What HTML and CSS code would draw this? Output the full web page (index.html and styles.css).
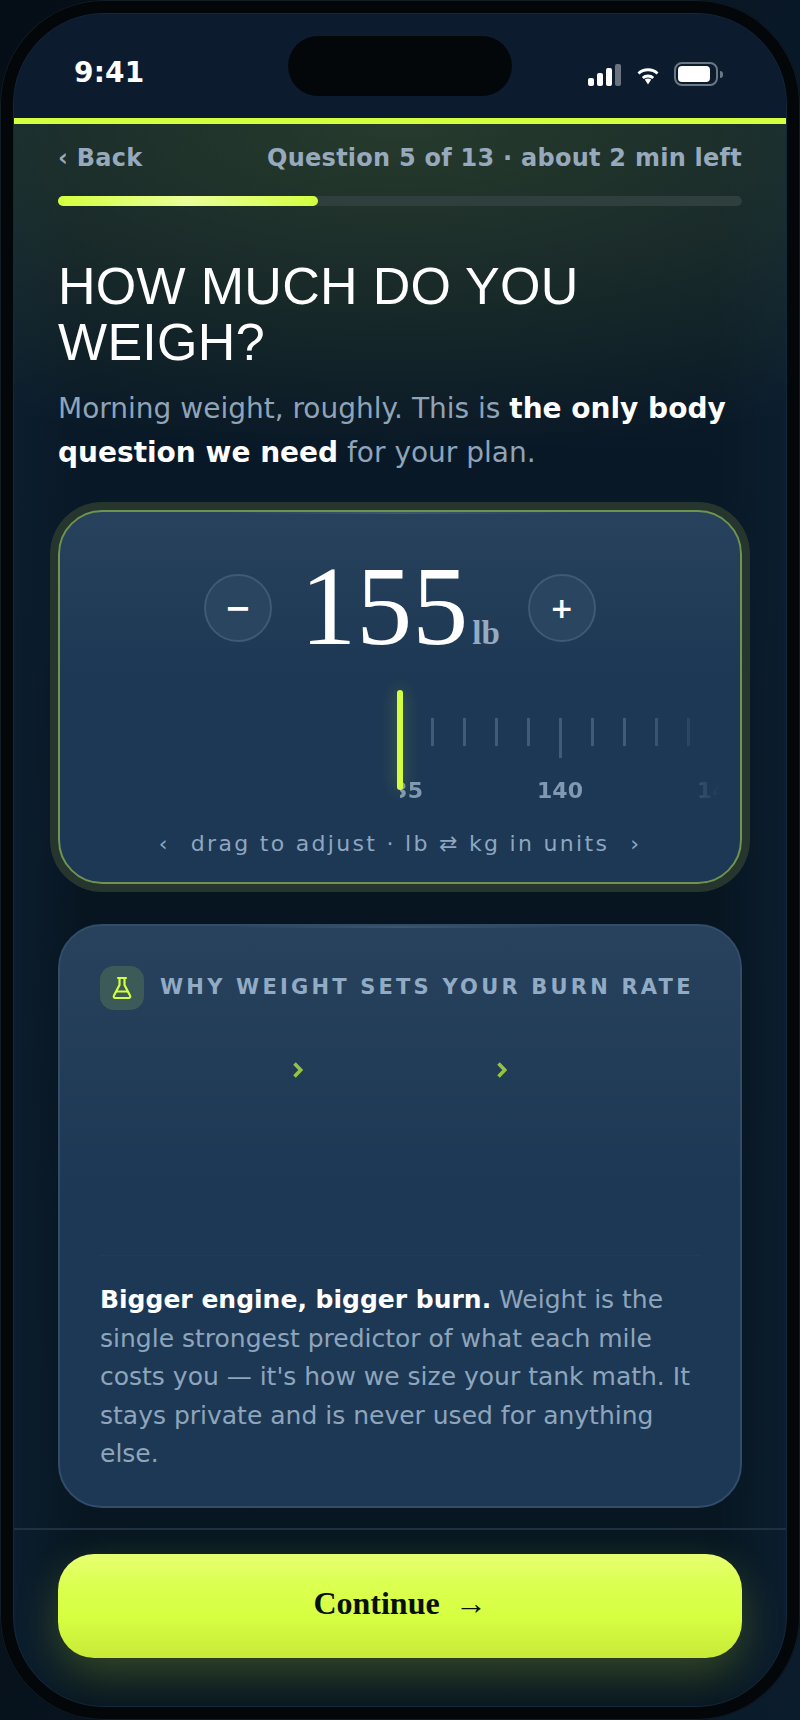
FILE: index.html
```html
<!DOCTYPE html>
<html lang="en">
<head>
    <meta charset="UTF-8">
    <meta name="viewport" content="width=device-width, initial-scale=1.0">
    <title>Weight question</title>
    <link rel="stylesheet" href="styles.css">
</head>
<body>
    <div class="phone">
        <div class="screen">
            <div class="status-bar">
                <span class="time">9:41</span>
                <div class="island"></div>
                <div class="status-icons">
                    <div class="signal">
                        <span class="bar bar-1"></span>
                        <span class="bar bar-2"></span>
                        <span class="bar bar-3"></span>
                        <span class="bar bar-4"></span>
                    </div>
                    <svg class="wifi" width="22" height="18" viewBox="0 0 22 18" fill="none">
                        <path d="M1.5 6.5C6.8 1.6 15.2 1.6 20.5 6.5" stroke="#fff" stroke-width="3"/>
                        <path d="M5.8 11C8.7 8.4 13.3 8.4 16.2 11" stroke="#fff" stroke-width="3"/>
                        <path d="M7.8 12.6C9.7 11.2 12.3 11.2 14.2 12.6L11 17.6Z" fill="#fff"/>
                    </svg>
                    <div class="battery">
                        <div class="battery-body"><span class="battery-fill"></span></div>
                        <span class="battery-nub"></span>
                    </div>
                </div>
            </div>
            <div class="accent-line"></div>

            <main class="content">
                <div class="nav-row">
                    <span class="back">‹ Back</span>
                    <span class="counter">Question 5 of 13 · about 2 min left</span>
                </div>
                <div class="progress"><div class="progress-fill"></div></div>

                <h1 class="title">HOW MUCH DO YOU WEIGH?</h1>
                <p class="subtitle">Morning weight, roughly. This is <strong>the only body question we need</strong> for your plan.</p>

                <section class="card picker">
                    <div class="stepper">
                        <button class="step-btn step-minus" type="button">−</button>
                        <div class="value">155<span class="unit">lb</span></div>
                        <button class="step-btn" type="button">+</button>
                    </div>
                    <div class="ruler">
                        <div class="needle"></div>
                        <div class="ruler-strip">
                            <div class="ticks">
                                <span class="tick"></span>
                                <span class="tick"></span>
                                <span class="tick"></span>
                                <span class="tick"></span>
                                <span class="tick"></span>
                                <span class="tick tick-major"></span>
                                <span class="tick"></span>
                                <span class="tick"></span>
                                <span class="tick"></span>
                                <span class="tick"></span>
                            </div>
                            <div class="tick-labels">
                                <span>135</span>
                                <span>140</span>
                                <span>145</span>
                            </div>
                        </div>
                    </div>
                    <div class="hint">
                        <span>‹</span>
                        <span>drag to adjust · lb ⇄ kg in units</span>
                        <span>›</span>
                    </div>
                </section>

                <section class="card why">
                    <div class="why-head">
                        <div class="why-icon">
                            <svg width="22" height="24" viewBox="0 0 22 24" fill="none" stroke="#d4ff3f" stroke-width="2.2" stroke-linejoin="round" stroke-linecap="round">
                                <path d="M7 2h8"/>
                                <path d="M8.5 2v7L3 19.5A1.6 1.6 0 0 0 4.4 22h13.2a1.6 1.6 0 0 0 1.4-2.5L13.5 9V2"/>
                                <path d="M5.5 15.5h11"/>
                            </svg>
                        </div>
                        <h2 class="why-title">WHY WEIGHT SETS YOUR BURN RATE</h2>
                    </div>
                    <div class="flow">
                        <div class="flow-step"></div>
                        <svg class="chevron" width="10" height="16" viewBox="0 0 10 16" fill="none">
                            <path d="M1.5 1.5L7.8 8L1.5 14.5" stroke="#96c43f" stroke-width="3.6"/>
                        </svg>
                        <div class="flow-step"></div>
                        <svg class="chevron" width="10" height="16" viewBox="0 0 10 16" fill="none">
                            <path d="M1.5 1.5L7.8 8L1.5 14.5" stroke="#96c43f" stroke-width="3.6"/>
                        </svg>
                        <div class="flow-step"></div>
                    </div>
                    <p class="why-text"><strong>Bigger engine, bigger burn.</strong> Weight is the single strongest predictor of what each mile costs you — it's how we size your tank math. It stays private and is never used for anything else.</p>
                </section>
            </main>

            <footer class="footer">
                <button class="continue" type="button">Continue <span class="continue-arrow">→</span></button>
            </footer>
        </div>
    </div>
</body>
</html>
```

FILE: styles.css
```css
* {
    box-sizing: border-box;
}

body {
    margin: 0;
    width: 800px;
    height: 1720px;
    background: linear-gradient(100deg, #050e16 0%, #0b1c2d 100%);
    font-family: "DejaVu Sans", sans-serif;
    overflow: hidden;
}

.phone {
    width: 800px;
    height: 1720px;
    padding: 13px;
    background-color: #03070a;
    border-radius: 104px;
    box-shadow: inset 0 0 0 1px #121c25;
}

.screen {
    height: 1694px;
    border: 1px solid #13283a;
    border-radius: 91px;
    overflow: hidden;
    display: flex;
    flex-direction: column;
    background:
        linear-gradient(90deg, #0b1d2e 0%, rgba(11, 29, 46, 0) 9%, rgba(11, 29, 46, 0) 91%, #0b1d2e 100%),
        linear-gradient(180deg, #0b1b2a 0%, #091826 30%, #07141f 60%, #081722 100%);
}

/* status bar */
.status-bar {
    height: 104px;
    flex-shrink: 0;
    display: flex;
    align-items: flex-start;
    padding: 0 63px 0 60px;
    background-color: #0c1c2e;
    position: relative;
}

.time {
    margin-top: 42px;
    color: white;
    font-size: 28px;
    font-weight: bold;
    line-height: 34px;
    letter-spacing: 0.2px;
}

.island {
    position: absolute;
    left: 274px;
    top: 22px;
    width: 224px;
    height: 60px;
    border-radius: 30px;
    background-color: #03070a;
}

.status-icons {
    margin-left: auto;
    margin-top: 48px;
    display: flex;
    align-items: flex-end;
}

.signal {
    display: flex;
    align-items: flex-end;
    gap: 3px;
    height: 24px;
}

.bar {
    width: 6px;
    border-radius: 2px;
    background-color: white;
}

.bar-1 { height: 8px; }
.bar-2 { height: 13px; }
.bar-3 { height: 18px; }
.bar-4 { height: 22px; background-color: #69747f; }

.wifi {
    margin-left: 16px;
    margin-bottom: 1px;
}

.battery {
    margin-left: 15px;
    display: flex;
    align-items: center;
}

.battery-body {
    width: 44px;
    height: 24px;
    padding: 2px;
    border: 2px solid #6b7884;
    border-radius: 8px;
}

.battery-fill {
    display: block;
    height: 16px;
    width: 32px;
    border-radius: 4px;
    background-color: white;
}

.battery-nub {
    width: 3px;
    height: 7px;
    margin-left: 2px;
    border-radius: 0 3px 3px 0;
    background-color: #6b7884;
}

.accent-line {
    height: 6px;
    flex-shrink: 0;
    background-color: #d4ff3f;
}

/* main column */
.content {
    flex: 1;
    min-height: 0;
    padding: 20px 44px 0;
    background:
        radial-gradient(ellipse 110% 330px at 50% 0, rgba(212, 255, 63, 0.14) 0%, rgba(212, 255, 63, 0.09) 40%, rgba(212, 255, 63, 0) 100%) no-repeat;
}

.nav-row {
    display: flex;
    justify-content: space-between;
    height: 28px;
    line-height: 28px;
    color: #97a9bd;
    font-size: 24px;
    font-weight: bold;
    letter-spacing: 0.25px;
}

.progress {
    margin-top: 24px;
    height: 10px;
    border-radius: 5px;
    background-color: #2e3f3e;
}

.progress-fill {
    width: 38%;
    height: 100%;
    border-radius: 5px;
    background: linear-gradient(90deg, #d4ff3f 0%, #e9ff99 50%, #d4ff3f 100%);
}

.title {
    margin: 52px 0 0;
    color: white;
    font-family: "Liberation Sans", Arial, sans-serif;
    font-size: 52px;
    font-weight: normal;
    line-height: 56px;
    letter-spacing: 0.3px;
}

.subtitle {
    margin: 17px 0 0;
    color: #8fa3b9;
    font-size: 28px;
    line-height: 44px;
}

.subtitle strong {
    color: white;
}

.card {
    position: relative;
    border: 2px solid #324d68;
    border-radius: 44px;
    background: linear-gradient(180deg, #28425d 0%, #1d3854 45%, #1d3854 100%);
}

/* thin highlight along the top edge */
.card::before {
    content: "";
    position: absolute;
    left: 25%;
    right: 25%;
    top: 0;
    height: 2px;
    background: linear-gradient(90deg, transparent, rgba(255, 255, 255, 0.1), transparent);
}

/* weight picker */
.picker {
    margin-top: 35px;
    height: 374px;
    padding-top: 62px;
    border-color: #6f9450;
    box-shadow: 0 0 0 8px #26362e;
}

.stepper {
    display: flex;
    justify-content: center;
    gap: 28px;
}

.step-btn {
    width: 68px;
    height: 68px;
    padding: 0;
    border: 2px solid #3e5a74;
    border-radius: 50%;
    background-color: #2a4560;
    color: white;
    font-family: "DejaVu Sans", sans-serif;
    font-size: 28px;
    font-weight: bold;
    cursor: pointer;
}

.step-minus {
    font-size: 32px;
}

.value {
    height: 68px;
    line-height: 64px;
    color: white;
    font-family: "Liberation Serif", "Times New Roman", serif;
    font-size: 112px;
    white-space: nowrap;
}

.unit {
    margin-left: 4px;
    color: #94abc4;
    font-size: 33px;
    font-weight: bold;
}

.ruler {
    position: relative;
    width: 320px;
    margin-top: 48px;
    margin-left: 50%;
}

.needle {
    position: absolute;
    left: -3px;
    top: 0;
    z-index: 1;
    width: 6px;
    height: 100px;
    border-radius: 3px;
    background-color: #d4ff3f;
    box-shadow: 0 0 16px rgba(212, 255, 63, 0.3);
}

.ruler-strip {
    overflow: hidden;
    padding-top: 28px;
    -webkit-mask-image: linear-gradient(90deg, #000 75%, transparent 100%);
    mask-image: linear-gradient(90deg, #000 75%, transparent 100%);
}

.ticks {
    display: flex;
    align-items: flex-start;
    gap: 29px;
    height: 40px;
    margin-left: -1.5px;
}

.tick {
    flex-shrink: 0;
    width: 3px;
    height: 28px;
    background-color: #405c79;
}

.tick-major {
    height: 40px;
}

.tick-labels {
    display: flex;
    margin: 16px 0 0 -80px;
    line-height: 34px;
    color: #8098b2;
    font-size: 22px;
    font-weight: bold;
}

.tick-labels span {
    flex-shrink: 0;
    width: 160px;
    text-align: center;
}

.hint {
    display: flex;
    justify-content: center;
    gap: 21px;
    margin-top: 20px;
    line-height: 32px;
    color: #8ea6c0;
    font-size: 22px;
    letter-spacing: 2.3px;
}

/* explainer card */
.why {
    margin-top: 40px;
    height: 584px;
    padding: 40px 40px 0;
}

.why-head {
    display: flex;
    align-items: center;
    gap: 16px;
}

.why-icon {
    width: 44px;
    height: 44px;
    flex-shrink: 0;
    display: flex;
    align-items: center;
    justify-content: center;
    border-radius: 14px;
    background-color: #3c5a58;
}

.why-title {
    margin: 0 0 3px;
    color: #92abc5;
    font-size: 21px;
    font-weight: bold;
    letter-spacing: 3.2px;
    white-space: nowrap;
}

.flow {
    display: flex;
    align-items: flex-start;
    height: 245px;
    padding-top: 52px;
}

.flow-step {
    flex: 1;
}

.why-text {
    margin: 0;
    padding-top: 25px;
    border-top: 1px solid rgba(255, 255, 255, 0.025);
    color: #8ea5bc;
    font-size: 25px;
    line-height: 38.6px;
}

.why-text strong {
    color: white;
}

/* bottom action */
.footer {
    flex-shrink: 0;
    height: 178px;
    padding: 24px 44px 0;
    border-top: 2px solid #1f3140;
}

.continue {
    width: 100%;
    height: 104px;
    padding: 0 0 5px;
    border: none;
    border-radius: 36px;
    background: linear-gradient(180deg, #e6ff72 0%, #dcff50 30%, #d6ff42 60%, #c8ea38 100%);
    box-shadow: 0 16px 44px rgba(212, 255, 63, 0.22);
    color: #07110a;
    font-family: "Liberation Serif", "Times New Roman", serif;
    font-size: 32px;
    font-weight: bold;
    cursor: pointer;
}

.continue-arrow {
    margin-left: 7px;
    font-weight: normal;
}
```
